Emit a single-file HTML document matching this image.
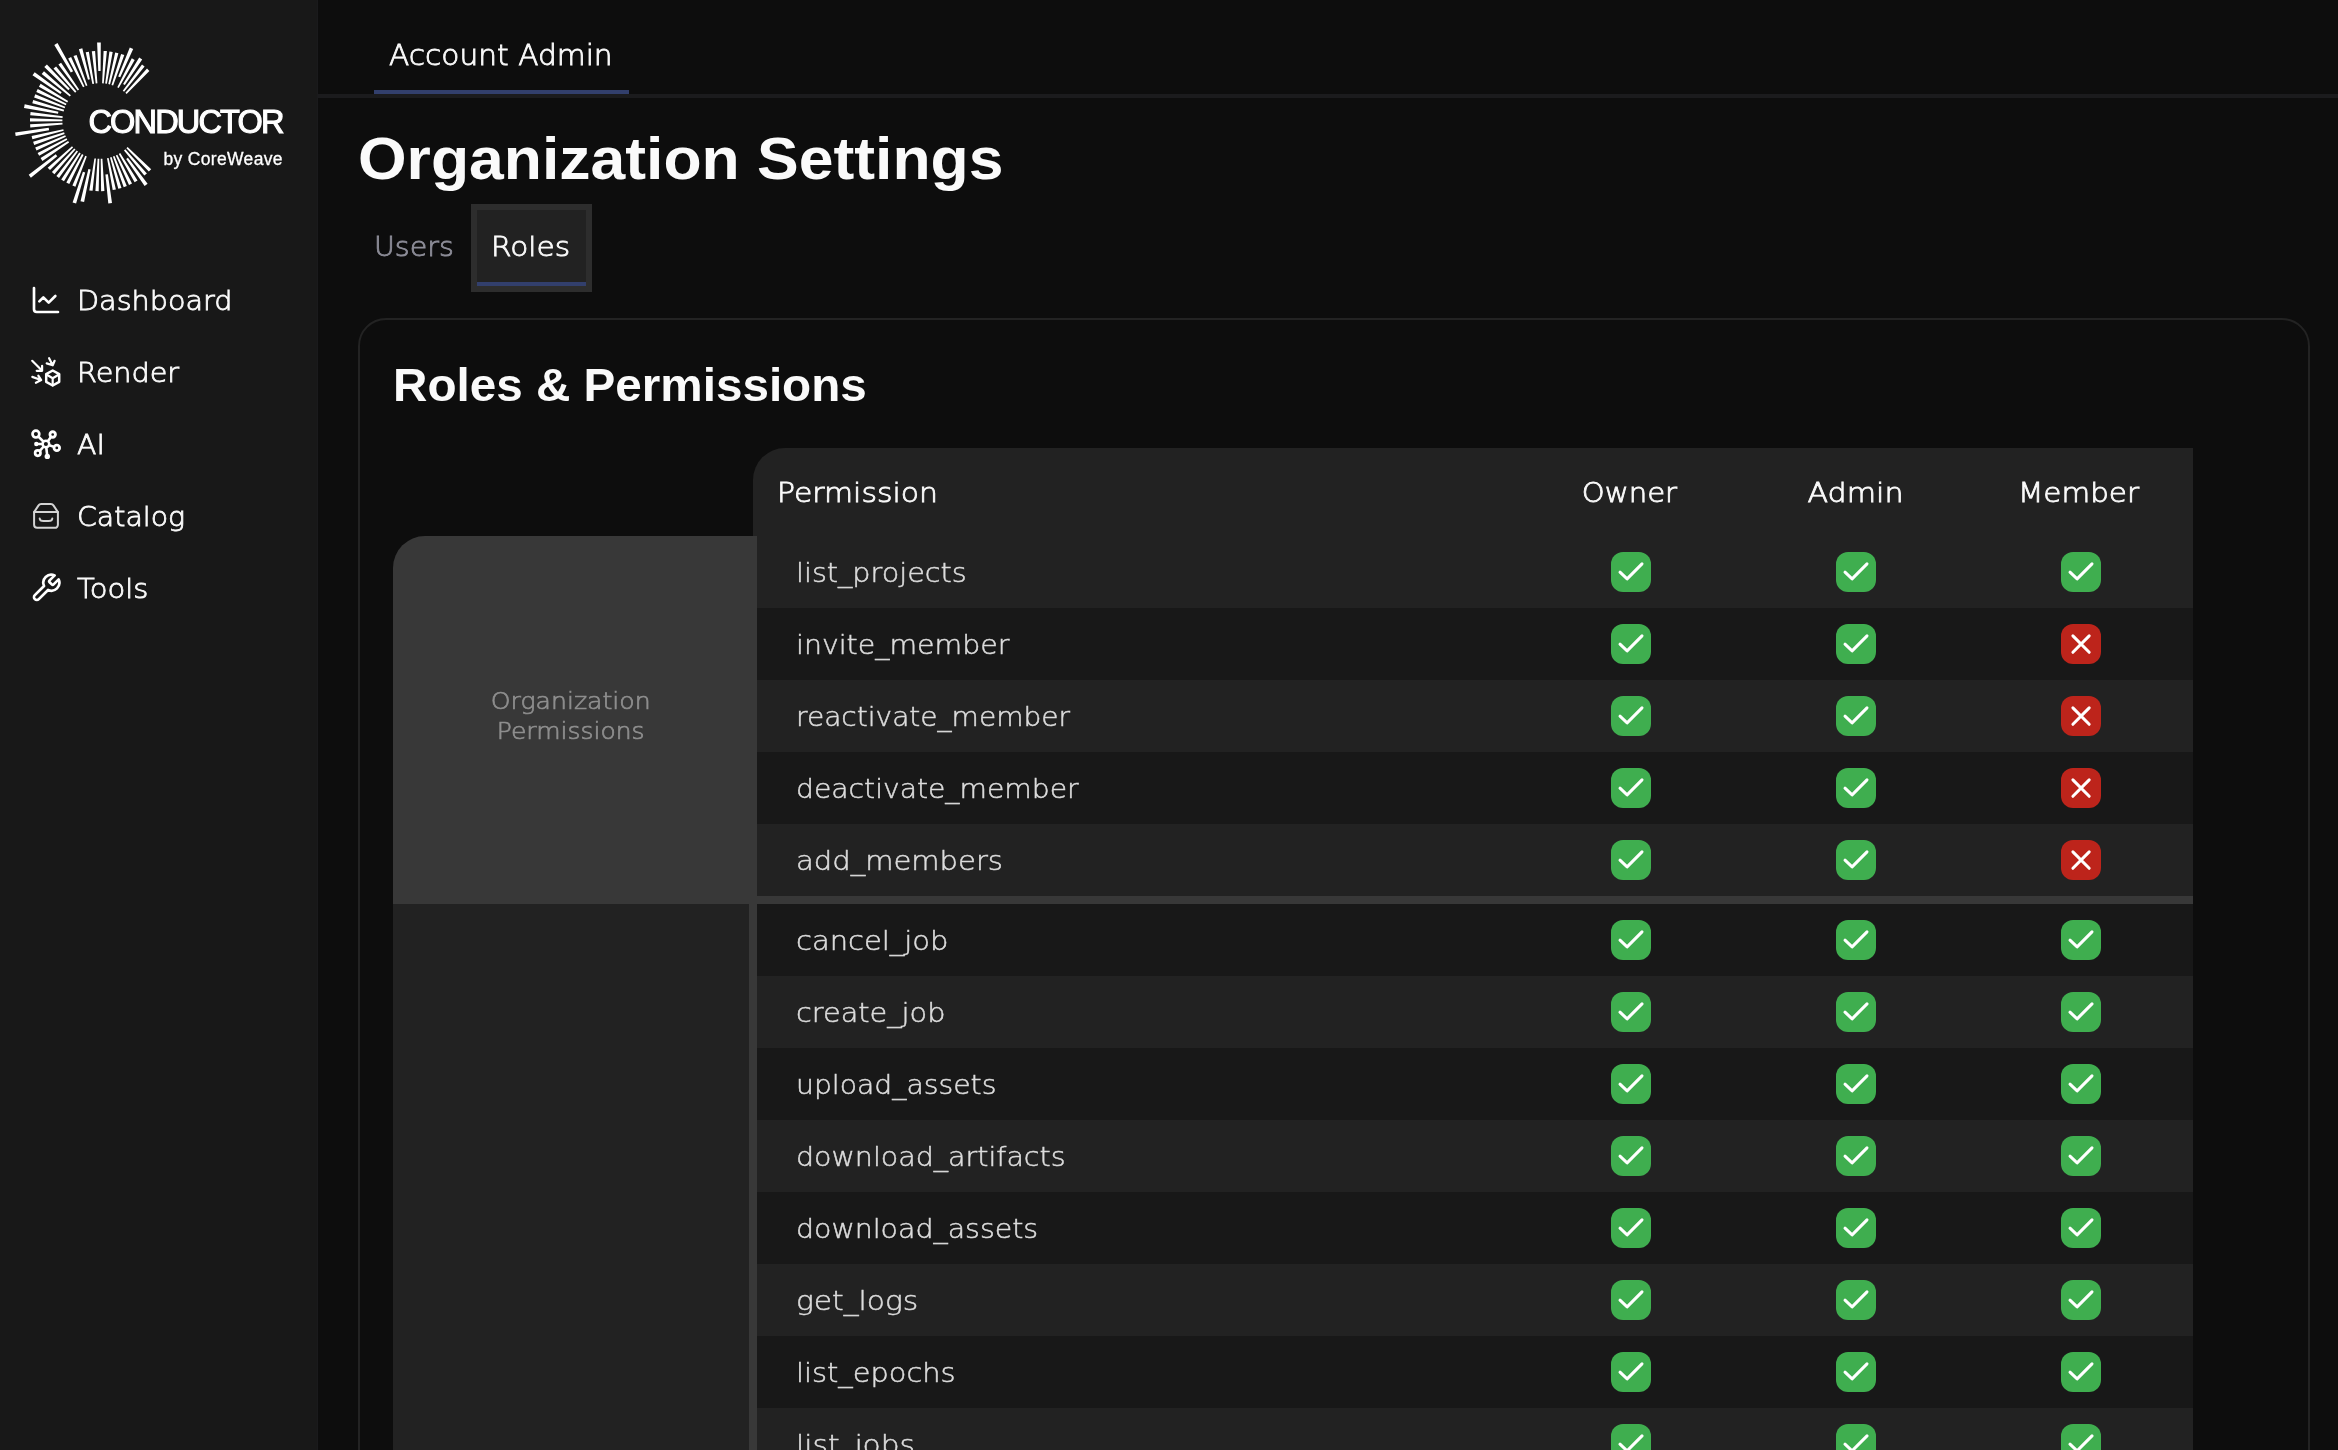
<!DOCTYPE html>
<html lang="en"><head><meta charset="utf-8"><title>Organization Settings</title>
<style>
*{box-sizing:border-box}
html,body{margin:0;padding:0}
body{width:2338px;height:1450px;overflow:hidden;background:#0d0d0d;color:#fafafa;font-family:"DejaVu Sans Light","DejaVu Sans","Liberation Sans",sans-serif;font-size:27px;position:relative;-webkit-text-stroke:0.8px currentColor}
.t{position:absolute;white-space:nowrap;line-height:40px}
#wrap{position:absolute;left:0;top:0;width:2338px;height:1450px;overflow:hidden;will-change:transform}
#side{position:absolute;left:0;top:0;width:318px;height:1450px;background:#181818;border-right:1px solid #1a1a1c}
#logo{position:absolute;left:0;top:0;width:318px;height:240px}
#lg1{font:32.5px/40px "Liberation Sans","DejaVu Sans",sans-serif;-webkit-text-stroke:1.1px #fff}
#lg2{font:17.5px/24px "Liberation Sans","DejaVu Sans",sans-serif;-webkit-text-stroke:0.3px #fff}
.ni{position:absolute;left:0;width:318px;height:72px}
.ni .ic{position:absolute;left:30px;top:20px;width:32px;height:32px}
.ni span{display:block;position:absolute;left:77.3px;line-height:40px;white-space:nowrap;font-size:27px}
#top{position:absolute;left:318px;top:0;width:2020px;height:98px;border-bottom:4px solid #1b1b1d}
#top .ul{position:absolute;left:56px;top:90px;width:255px;height:4px;background:#323f6c}
h1{position:absolute;margin:0;-webkit-text-stroke:0;font:bold 59px/80px "Liberation Sans","DejaVu Sans",sans-serif;white-space:nowrap}
#ro{position:absolute;left:477px;top:210px;width:109px;height:76px;background:#222;border-bottom:4px solid #323f6c;outline:6px solid #2d2d2d}
#card{position:absolute;left:358px;top:318px;width:1952px;height:1200px;border:2px solid #232323;border-radius:28px}
h2{position:absolute;margin:0;-webkit-text-stroke:0;font:bold 47px/64px "Liberation Sans","DejaVu Sans",sans-serif;white-space:nowrap}
#th{position:absolute;left:753px;top:448px;width:1440px;height:88px;background:#222;border-top-left-radius:32px}
.h{position:absolute;width:225px;text-align:center;line-height:40px;white-space:nowrap}
.g{position:absolute;left:393px;width:1800px;background:#383838}
.gc{position:absolute;left:0;top:0;width:356px;color:#8e8e8e;font-size:23.5px;line-height:30px;text-align:center;display:flex;align-items:center;justify-content:center;-webkit-text-stroke:0.7px #8e8e8e}
.rs{position:absolute;left:364px;top:0;width:1436px}
.r{height:72px;display:flex;align-items:center;position:relative}
.r.a{background:#222}
.r.b{background:#181818}
.l{width:761.5px;height:72px;position:relative;color:#dcdcdc;font-family:"DejaVu Sans Light","DejaVu Sans","Liberation Sans",sans-serif;-webkit-text-stroke:0.5px #dcdcdc}
.l span{display:block;position:absolute;left:38.7px;top:16.96px;line-height:40px;white-space:nowrap}
.c{width:225px;display:flex;justify-content:center}
.bx{width:40px;height:40px;display:block}
</style></head>
<body>
<div id="wrap">
<div id="side">
<svg id="logo" viewBox="0 0 318 240"><path fill="#fff" d="M126.6,94.0 L149.4,70.9 L147.0,68.6 L125.4,92.8Z M124.1,91.7 L144.6,66.6 L142.0,64.6 L122.8,90.7Z M124.8,85.0 L142.2,59.6 L139.2,57.6 L123.1,83.9Z M118.7,88.1 L134.7,59.9 L131.8,58.3 L117.3,87.3Z M120.2,77.3 L133.2,49.1 L129.8,47.6 L118.2,76.5Z M113.1,85.5 L124.3,55.0 L121.1,54.0 L111.5,84.9Z M110.0,84.5 L118.4,53.2 L115.2,52.4 L108.3,84.1Z M106.9,83.8 L112.7,51.9 L109.4,51.4 L105.2,83.5Z M103.7,83.4 L106.9,51.1 L103.6,50.9 L102.1,83.2Z M100.6,71.0 L100.8,42.5 L97.1,42.5 L98.3,71.0Z M97.4,83.3 L95.1,51.0 L91.8,51.3 L95.7,83.5Z M94.1,83.7 L88.9,51.7 L85.7,52.3 L92.4,84.0Z M89.9,79.2 L82.3,48.3 L78.9,49.2 L88.0,79.8Z M87.4,85.4 L76.6,54.9 L73.5,56.1 L85.9,86.0Z M84.5,86.6 L71.1,57.1 L68.2,58.5 L83.0,87.3Z M73.1,71.3 L57.5,43.0 L54.3,44.9 L70.8,72.6Z M79.1,89.6 L61.1,62.7 L58.4,64.6 L77.7,90.6Z M76.4,91.6 L56.1,66.4 L53.5,68.5 L75.1,92.7Z M69.8,88.8 L46.9,64.5 L44.3,67.1 L68.3,90.2Z M70.9,95.2 L44.0,71.3 L41.7,74.0 L69.8,96.5Z M61.7,92.3 L34.7,72.2 L32.5,75.2 L60.4,94.1Z M68.1,101.0 L40.6,83.8 L38.9,86.7 L67.2,102.5Z M66.5,103.8 L37.7,89.0 L36.3,91.9 L65.8,105.3Z M65.2,106.7 L35.3,94.3 L34.1,97.4 L64.6,108.2Z M64.1,109.8 L33.2,100.1 L32.3,103.2 L63.6,111.4Z M58.4,111.8 L24.7,104.3 L24.0,107.9 L58.0,113.7Z M62.7,116.2 L30.6,112.0 L30.2,115.3 L62.5,117.9Z M62.4,119.6 L30.0,118.2 L30.0,121.6 L62.4,121.3Z M62.4,122.8 L30.1,124.2 L30.3,127.5 L62.6,124.5Z M48.7,127.8 L15.1,132.4 L15.7,136.0 L49.1,130.2Z M63.3,129.2 L31.6,136.1 L32.4,139.3 L63.7,130.8Z M64.1,132.3 L33.1,141.8 L34.2,145.0 L64.6,133.9Z M65.2,135.3 L35.2,147.5 L36.5,150.5 L65.9,136.8Z M66.5,138.2 L37.6,152.9 L39.2,155.8 L67.3,139.7Z M68.1,141.0 L40.6,158.1 L42.4,160.9 L69.1,142.4Z M55.7,154.3 L28.7,174.8 L30.9,177.7 L57.3,156.3Z M72.0,146.2 L47.7,167.7 L50.0,170.1 L73.1,147.4Z M74.2,148.5 L51.9,172.0 L54.4,174.2 L75.5,149.6Z M76.7,150.6 L56.4,175.9 L59.0,177.9 L78.0,151.6Z M79.3,152.5 L61.2,179.4 L64.0,181.2 L80.7,153.4Z M82.0,154.1 L66.3,182.5 L69.3,184.0 L83.5,154.9Z M85.3,155.7 L72.4,185.5 L75.4,186.7 L86.8,156.4Z M82.9,171.8 L72.6,202.5 L76.1,203.6 L85.2,172.6Z M88.4,168.9 L80.5,201.2 L84.1,202.0 L90.6,169.4Z M94.4,158.4 L89.3,190.4 L92.6,190.8 L96.0,158.6Z M97.6,158.7 L95.4,191.1 L98.7,191.2 L99.3,158.8Z M100.7,158.8 L101.1,191.2 L104.4,191.1 L102.4,158.7Z M105.4,174.5 L108.3,203.5 L112.0,203.1 L107.9,174.2Z M107.0,158.2 L112.7,190.1 L115.9,189.4 L108.6,157.9Z M110.0,157.5 L118.3,188.8 L121.5,187.9 L111.6,157.0Z M112.9,156.6 L123.7,187.2 L126.8,186.0 L114.5,156.0Z M115.8,155.5 L129.0,185.0 L132.0,183.6 L117.3,154.7Z M118.8,153.9 L134.6,182.2 L137.5,180.5 L120.2,153.1Z M126.2,159.0 L144.6,185.9 L147.6,183.8 L127.9,157.7Z M124.0,150.4 L144.3,175.6 L146.9,173.5 L125.3,149.3Z M126.4,148.2 L148.8,171.6 L151.2,169.3 L127.6,147.0Z"/>
</svg>
<div class="t" id="lg1" style="left:88.5px;top:101.74px;letter-spacing:-1.85px;color:#fff">CONDUCTOR</div>
<div class="t" id="lg2" style="left:163.5px;top:146.74px;letter-spacing:0.33px;color:#fff">by CoreWeave</div>
<div class="ni" style="top:264px"><svg class="ic" viewBox="0 0 24 24" fill="none" stroke="#fff" stroke-width="2" stroke-linecap="round" stroke-linejoin="round"><path d="M3 3v16a2 2 0 0 0 2 2h16"/><path d="m19 9-5 5-4-4-3 3"/></svg><span style="top:16.66px;transform:scaleX(1.0614);transform-origin:left top">Dashboard</span></div>
<div class="ni" style="top:336px"><svg class="ic" viewBox="0 0 32 32" fill="none" stroke="#fff" stroke-width="2.2" stroke-linecap="round" stroke-linejoin="round">
<path d="M2.2 4.8 L11.7 14.3 M6.7 14.8 H12.1 V9.8"/>
<path d="M19.1 2.2 L22.6 9 M16.7 7.4 L22.7 9.3 L24.6 4.8"/>
<path d="M2.3 20.9 L10.9 24 M8.3 19.7 L11.2 24.1 L5.9 26.8"/>
<path d="M22.7 14.5 L29.2 18.2 V25.8 L22.7 29.5 L16.2 25.8 V18.2 Z" stroke-width="2.5"/>
<path d="M22.7 22.2 V29.3 M22.7 22.2 L16.4 18.5 M22.7 22.2 L29 18.5" stroke-width="2.2"/>
</svg><span style="top:16.66px;transform:scaleX(1.0628);transform-origin:left top">Render</span></div>
<div class="ni" style="top:408px"><svg class="ic" viewBox="0 0 32 32" fill="none" stroke="#fff" stroke-linecap="round">
<path d="M15.9 16 L5.9 6.1 M15.9 16 L22.7 6.5 M15.9 16 L26.8 19.9 M15.9 16 L7.8 25.1 M15.9 16 L6.3 16 M15.9 16 L17.3 28.4" stroke-width="2.6"/>
<circle cx="15.9" cy="16" r="3.3" fill="#181818" stroke-width="2.5"/>
<circle cx="5.9" cy="6.1" r="3.4" fill="#181818" stroke-width="2.7"/>
<circle cx="22.7" cy="6.5" r="2.75" fill="#181818" stroke-width="2.8"/>
<circle cx="26.8" cy="19.9" r="2.8" fill="#181818" stroke-width="2.8"/>
<circle cx="7.8" cy="25.1" r="2.7" fill="#181818" stroke-width="2.7"/>
<circle cx="6.3" cy="16" r="2.2" fill="#fff" stroke="none"/>
<circle cx="17.3" cy="28.4" r="2.7" fill="#fff" stroke="none"/>
</svg><span style="top:16.66px;transform:scaleX(1.0508);transform-origin:left top">AI</span></div>
<div class="ni" style="top:480px"><svg class="ic" viewBox="0 0 32 32" fill="none" stroke="#d4d4d4" stroke-width="2" stroke-linecap="round" stroke-linejoin="round">
<path d="M4.1 12.1 V24.8 a3 3 0 0 0 3 3 H24.9 a3 3 0 0 0 3 -3 V12.1"/>
<path d="M4.1 12.1 L8.4 5.6 a3.4 3.4 0 0 1 2.8 -1.5 H20.8 a3.4 3.4 0 0 1 2.8 1.5 L27.9 12.1 Z"/>
<path d="M9.7 18.5 a3.8 2.7 0 0 0 3.8 2.6 h5 a3.8 2.7 0 0 0 3.8 -2.6"/>
</svg><span style="top:16.66px;transform:scaleX(1.0521);transform-origin:left top">Catalog</span></div>
<div class="ni" style="top:552px"><svg class="ic" viewBox="0 0 24 24" fill="none" stroke="#fff" stroke-width="2" stroke-linecap="round" stroke-linejoin="round"><path d="M14.7 6.3a1 1 0 0 0 0 1.4l1.6 1.6a1 1 0 0 0 1.4 0l3.77-3.77a6 6 0 0 1-7.94 7.94l-6.91 6.91a2.12 2.12 0 0 1-3-3l6.91-6.91a6 6 0 0 1 7.94-7.94l-3.76 3.76z"/></svg><span style="top:16.66px;transform:scaleX(1.0748);transform-origin:left top">Tools</span></div>
</div>
<div id="top"><div class="ul"></div></div>
<div class="t" style="left:389px;top:34.78px;font-size:27.5px;transform:scaleX(1.0783);transform-origin:left top">Account Admin</div>
<h1 style="left:358px;top:119.16px;transform:scaleX(1.0586);transform-origin:left top">Organization Settings</h1>
<div class="t" style="left:374px;top:227.16px;color:#8d8d98;transform:scaleX(1.0556);transform-origin:left top">Users</div>
<div id="ro"></div>
<div class="t" style="left:491px;top:227.16px;transform:scaleX(1.0946);transform-origin:left top">Roles</div>
<div id="card"></div>
<h2 style="left:393px;top:353.01px;transform:scaleX(1.0133);transform-origin:left top">Roles &amp; Permissions</h2>
<div id="th"></div>
<div class="t" style="left:777px;top:472.86px;transform:scaleX(1.1053);transform-origin:left top">Permission</div>
<div class="h" style="left:1517px;top:472.86px;transform:scaleX(1.0801);transform-origin:center top">Owner</div>
<div class="h" style="left:1743px;top:472.86px;transform:scaleX(1.1162);transform-origin:center top">Admin</div>
<div class="h" style="left:1965.5px;top:472.86px;transform:scaleX(1.0905);transform-origin:center top">Member</div>
<div class="g" style="top:536px;height:368px;border-top-left-radius:32px">
<div class="gc" style="height:360px"><div><span style="display:block;transform:scaleX(1.0706);transform-origin:center top">Organization</span><span style="display:block;transform:scaleX(1.0634);transform-origin:center top">Permissions</span></div></div>
<div class="rs">
<div class="r a"><div class="l"><span style="transform:scaleX(1.0603);transform-origin:left top">list_projects</span></div><div class="c"><svg class="bx" viewBox="0 0 40 40"><rect width="40" height="40" rx="12" fill="#3fae4f"/><path d="M9 20.2 L16.1 26.9 L31 11.9" fill="none" stroke="#fff" stroke-width="3" stroke-linecap="round" stroke-linejoin="round"/></svg></div><div class="c"><svg class="bx" viewBox="0 0 40 40"><rect width="40" height="40" rx="12" fill="#3fae4f"/><path d="M9 20.2 L16.1 26.9 L31 11.9" fill="none" stroke="#fff" stroke-width="3" stroke-linecap="round" stroke-linejoin="round"/></svg></div><div class="c"><svg class="bx" viewBox="0 0 40 40"><rect width="40" height="40" rx="12" fill="#3fae4f"/><path d="M9 20.2 L16.1 26.9 L31 11.9" fill="none" stroke="#fff" stroke-width="3" stroke-linecap="round" stroke-linejoin="round"/></svg></div></div>
<div class="r b"><div class="l"><span style="transform:scaleX(1.0520);transform-origin:left top">invite_member</span></div><div class="c"><svg class="bx" viewBox="0 0 40 40"><rect width="40" height="40" rx="12" fill="#3fae4f"/><path d="M9 20.2 L16.1 26.9 L31 11.9" fill="none" stroke="#fff" stroke-width="3" stroke-linecap="round" stroke-linejoin="round"/></svg></div><div class="c"><svg class="bx" viewBox="0 0 40 40"><rect width="40" height="40" rx="12" fill="#3fae4f"/><path d="M9 20.2 L16.1 26.9 L31 11.9" fill="none" stroke="#fff" stroke-width="3" stroke-linecap="round" stroke-linejoin="round"/></svg></div><div class="c"><svg class="bx" viewBox="0 0 40 40"><rect width="40" height="40" rx="12" fill="#bd241b"/><path d="M11.9 11.9 L28.2 28.3 M28.2 11.9 L11.9 28.3" fill="none" stroke="#fff" stroke-width="3" stroke-linecap="round"/></svg></div></div>
<div class="r a"><div class="l"><span style="transform:scaleX(1.0385);transform-origin:left top">reactivate_member</span></div><div class="c"><svg class="bx" viewBox="0 0 40 40"><rect width="40" height="40" rx="12" fill="#3fae4f"/><path d="M9 20.2 L16.1 26.9 L31 11.9" fill="none" stroke="#fff" stroke-width="3" stroke-linecap="round" stroke-linejoin="round"/></svg></div><div class="c"><svg class="bx" viewBox="0 0 40 40"><rect width="40" height="40" rx="12" fill="#3fae4f"/><path d="M9 20.2 L16.1 26.9 L31 11.9" fill="none" stroke="#fff" stroke-width="3" stroke-linecap="round" stroke-linejoin="round"/></svg></div><div class="c"><svg class="bx" viewBox="0 0 40 40"><rect width="40" height="40" rx="12" fill="#bd241b"/><path d="M11.9 11.9 L28.2 28.3 M28.2 11.9 L11.9 28.3" fill="none" stroke="#fff" stroke-width="3" stroke-linecap="round"/></svg></div></div>
<div class="r b"><div class="l"><span style="transform:scaleX(1.0449);transform-origin:left top">deactivate_member</span></div><div class="c"><svg class="bx" viewBox="0 0 40 40"><rect width="40" height="40" rx="12" fill="#3fae4f"/><path d="M9 20.2 L16.1 26.9 L31 11.9" fill="none" stroke="#fff" stroke-width="3" stroke-linecap="round" stroke-linejoin="round"/></svg></div><div class="c"><svg class="bx" viewBox="0 0 40 40"><rect width="40" height="40" rx="12" fill="#3fae4f"/><path d="M9 20.2 L16.1 26.9 L31 11.9" fill="none" stroke="#fff" stroke-width="3" stroke-linecap="round" stroke-linejoin="round"/></svg></div><div class="c"><svg class="bx" viewBox="0 0 40 40"><rect width="40" height="40" rx="12" fill="#bd241b"/><path d="M11.9 11.9 L28.2 28.3 M28.2 11.9 L11.9 28.3" fill="none" stroke="#fff" stroke-width="3" stroke-linecap="round"/></svg></div></div>
<div class="r a"><div class="l"><span style="transform:scaleX(1.0755);transform-origin:left top">add_members</span></div><div class="c"><svg class="bx" viewBox="0 0 40 40"><rect width="40" height="40" rx="12" fill="#3fae4f"/><path d="M9 20.2 L16.1 26.9 L31 11.9" fill="none" stroke="#fff" stroke-width="3" stroke-linecap="round" stroke-linejoin="round"/></svg></div><div class="c"><svg class="bx" viewBox="0 0 40 40"><rect width="40" height="40" rx="12" fill="#3fae4f"/><path d="M9 20.2 L16.1 26.9 L31 11.9" fill="none" stroke="#fff" stroke-width="3" stroke-linecap="round" stroke-linejoin="round"/></svg></div><div class="c"><svg class="bx" viewBox="0 0 40 40"><rect width="40" height="40" rx="12" fill="#bd241b"/><path d="M11.9 11.9 L28.2 28.3 M28.2 11.9 L11.9 28.3" fill="none" stroke="#fff" stroke-width="3" stroke-linecap="round"/></svg></div></div>
</div></div>
<div class="g" style="top:904px;height:2600px">
<div class="gc" style="height:2600px;background:#222"><div><span style="display:block;transform:scaleX(1.0706);transform-origin:center top">Project</span><span style="display:block;transform:scaleX(1.0634);transform-origin:center top">Permissions</span></div></div>
<div class="rs">
<div class="r b"><div class="l"><span style="transform:scaleX(1.0729);transform-origin:left top">cancel_job</span></div><div class="c"><svg class="bx" viewBox="0 0 40 40"><rect width="40" height="40" rx="12" fill="#3fae4f"/><path d="M9 20.2 L16.1 26.9 L31 11.9" fill="none" stroke="#fff" stroke-width="3" stroke-linecap="round" stroke-linejoin="round"/></svg></div><div class="c"><svg class="bx" viewBox="0 0 40 40"><rect width="40" height="40" rx="12" fill="#3fae4f"/><path d="M9 20.2 L16.1 26.9 L31 11.9" fill="none" stroke="#fff" stroke-width="3" stroke-linecap="round" stroke-linejoin="round"/></svg></div><div class="c"><svg class="bx" viewBox="0 0 40 40"><rect width="40" height="40" rx="12" fill="#3fae4f"/><path d="M9 20.2 L16.1 26.9 L31 11.9" fill="none" stroke="#fff" stroke-width="3" stroke-linecap="round" stroke-linejoin="round"/></svg></div></div>
<div class="r a"><div class="l"><span style="transform:scaleX(1.0645);transform-origin:left top">create_job</span></div><div class="c"><svg class="bx" viewBox="0 0 40 40"><rect width="40" height="40" rx="12" fill="#3fae4f"/><path d="M9 20.2 L16.1 26.9 L31 11.9" fill="none" stroke="#fff" stroke-width="3" stroke-linecap="round" stroke-linejoin="round"/></svg></div><div class="c"><svg class="bx" viewBox="0 0 40 40"><rect width="40" height="40" rx="12" fill="#3fae4f"/><path d="M9 20.2 L16.1 26.9 L31 11.9" fill="none" stroke="#fff" stroke-width="3" stroke-linecap="round" stroke-linejoin="round"/></svg></div><div class="c"><svg class="bx" viewBox="0 0 40 40"><rect width="40" height="40" rx="12" fill="#3fae4f"/><path d="M9 20.2 L16.1 26.9 L31 11.9" fill="none" stroke="#fff" stroke-width="3" stroke-linecap="round" stroke-linejoin="round"/></svg></div></div>
<div class="r b"><div class="l"><span style="transform:scaleX(1.0469);transform-origin:left top">upload_assets</span></div><div class="c"><svg class="bx" viewBox="0 0 40 40"><rect width="40" height="40" rx="12" fill="#3fae4f"/><path d="M9 20.2 L16.1 26.9 L31 11.9" fill="none" stroke="#fff" stroke-width="3" stroke-linecap="round" stroke-linejoin="round"/></svg></div><div class="c"><svg class="bx" viewBox="0 0 40 40"><rect width="40" height="40" rx="12" fill="#3fae4f"/><path d="M9 20.2 L16.1 26.9 L31 11.9" fill="none" stroke="#fff" stroke-width="3" stroke-linecap="round" stroke-linejoin="round"/></svg></div><div class="c"><svg class="bx" viewBox="0 0 40 40"><rect width="40" height="40" rx="12" fill="#3fae4f"/><path d="M9 20.2 L16.1 26.9 L31 11.9" fill="none" stroke="#fff" stroke-width="3" stroke-linecap="round" stroke-linejoin="round"/></svg></div></div>
<div class="r a"><div class="l"><span style="transform:scaleX(1.0556);transform-origin:left top">download_artifacts</span></div><div class="c"><svg class="bx" viewBox="0 0 40 40"><rect width="40" height="40" rx="12" fill="#3fae4f"/><path d="M9 20.2 L16.1 26.9 L31 11.9" fill="none" stroke="#fff" stroke-width="3" stroke-linecap="round" stroke-linejoin="round"/></svg></div><div class="c"><svg class="bx" viewBox="0 0 40 40"><rect width="40" height="40" rx="12" fill="#3fae4f"/><path d="M9 20.2 L16.1 26.9 L31 11.9" fill="none" stroke="#fff" stroke-width="3" stroke-linecap="round" stroke-linejoin="round"/></svg></div><div class="c"><svg class="bx" viewBox="0 0 40 40"><rect width="40" height="40" rx="12" fill="#3fae4f"/><path d="M9 20.2 L16.1 26.9 L31 11.9" fill="none" stroke="#fff" stroke-width="3" stroke-linecap="round" stroke-linejoin="round"/></svg></div></div>
<div class="r b"><div class="l"><span style="transform:scaleX(1.0528);transform-origin:left top">download_assets</span></div><div class="c"><svg class="bx" viewBox="0 0 40 40"><rect width="40" height="40" rx="12" fill="#3fae4f"/><path d="M9 20.2 L16.1 26.9 L31 11.9" fill="none" stroke="#fff" stroke-width="3" stroke-linecap="round" stroke-linejoin="round"/></svg></div><div class="c"><svg class="bx" viewBox="0 0 40 40"><rect width="40" height="40" rx="12" fill="#3fae4f"/><path d="M9 20.2 L16.1 26.9 L31 11.9" fill="none" stroke="#fff" stroke-width="3" stroke-linecap="round" stroke-linejoin="round"/></svg></div><div class="c"><svg class="bx" viewBox="0 0 40 40"><rect width="40" height="40" rx="12" fill="#3fae4f"/><path d="M9 20.2 L16.1 26.9 L31 11.9" fill="none" stroke="#fff" stroke-width="3" stroke-linecap="round" stroke-linejoin="round"/></svg></div></div>
<div class="r a"><div class="l"><span style="transform:scaleX(1.0983);transform-origin:left top">get_logs</span></div><div class="c"><svg class="bx" viewBox="0 0 40 40"><rect width="40" height="40" rx="12" fill="#3fae4f"/><path d="M9 20.2 L16.1 26.9 L31 11.9" fill="none" stroke="#fff" stroke-width="3" stroke-linecap="round" stroke-linejoin="round"/></svg></div><div class="c"><svg class="bx" viewBox="0 0 40 40"><rect width="40" height="40" rx="12" fill="#3fae4f"/><path d="M9 20.2 L16.1 26.9 L31 11.9" fill="none" stroke="#fff" stroke-width="3" stroke-linecap="round" stroke-linejoin="round"/></svg></div><div class="c"><svg class="bx" viewBox="0 0 40 40"><rect width="40" height="40" rx="12" fill="#3fae4f"/><path d="M9 20.2 L16.1 26.9 L31 11.9" fill="none" stroke="#fff" stroke-width="3" stroke-linecap="round" stroke-linejoin="round"/></svg></div></div>
<div class="r b"><div class="l"><span style="transform:scaleX(1.0678);transform-origin:left top">list_epochs</span></div><div class="c"><svg class="bx" viewBox="0 0 40 40"><rect width="40" height="40" rx="12" fill="#3fae4f"/><path d="M9 20.2 L16.1 26.9 L31 11.9" fill="none" stroke="#fff" stroke-width="3" stroke-linecap="round" stroke-linejoin="round"/></svg></div><div class="c"><svg class="bx" viewBox="0 0 40 40"><rect width="40" height="40" rx="12" fill="#3fae4f"/><path d="M9 20.2 L16.1 26.9 L31 11.9" fill="none" stroke="#fff" stroke-width="3" stroke-linecap="round" stroke-linejoin="round"/></svg></div><div class="c"><svg class="bx" viewBox="0 0 40 40"><rect width="40" height="40" rx="12" fill="#3fae4f"/><path d="M9 20.2 L16.1 26.9 L31 11.9" fill="none" stroke="#fff" stroke-width="3" stroke-linecap="round" stroke-linejoin="round"/></svg></div></div>
<div class="r a"><div class="l"><span style="transform:scaleX(1.0982);transform-origin:left top">list_jobs</span></div><div class="c"><svg class="bx" viewBox="0 0 40 40"><rect width="40" height="40" rx="12" fill="#3fae4f"/><path d="M9 20.2 L16.1 26.9 L31 11.9" fill="none" stroke="#fff" stroke-width="3" stroke-linecap="round" stroke-linejoin="round"/></svg></div><div class="c"><svg class="bx" viewBox="0 0 40 40"><rect width="40" height="40" rx="12" fill="#3fae4f"/><path d="M9 20.2 L16.1 26.9 L31 11.9" fill="none" stroke="#fff" stroke-width="3" stroke-linecap="round" stroke-linejoin="round"/></svg></div><div class="c"><svg class="bx" viewBox="0 0 40 40"><rect width="40" height="40" rx="12" fill="#3fae4f"/><path d="M9 20.2 L16.1 26.9 L31 11.9" fill="none" stroke="#fff" stroke-width="3" stroke-linecap="round" stroke-linejoin="round"/></svg></div></div>
<div class="r b"><div class="l"><span style="transform:scaleX(1.0500);transform-origin:left top">list_tasks</span></div><div class="c"><svg class="bx" viewBox="0 0 40 40"><rect width="40" height="40" rx="12" fill="#3fae4f"/><path d="M9 20.2 L16.1 26.9 L31 11.9" fill="none" stroke="#fff" stroke-width="3" stroke-linecap="round" stroke-linejoin="round"/></svg></div><div class="c"><svg class="bx" viewBox="0 0 40 40"><rect width="40" height="40" rx="12" fill="#3fae4f"/><path d="M9 20.2 L16.1 26.9 L31 11.9" fill="none" stroke="#fff" stroke-width="3" stroke-linecap="round" stroke-linejoin="round"/></svg></div><div class="c"><svg class="bx" viewBox="0 0 40 40"><rect width="40" height="40" rx="12" fill="#3fae4f"/><path d="M9 20.2 L16.1 26.9 L31 11.9" fill="none" stroke="#fff" stroke-width="3" stroke-linecap="round" stroke-linejoin="round"/></svg></div></div>
</div></div>
</div>
</body></html>
